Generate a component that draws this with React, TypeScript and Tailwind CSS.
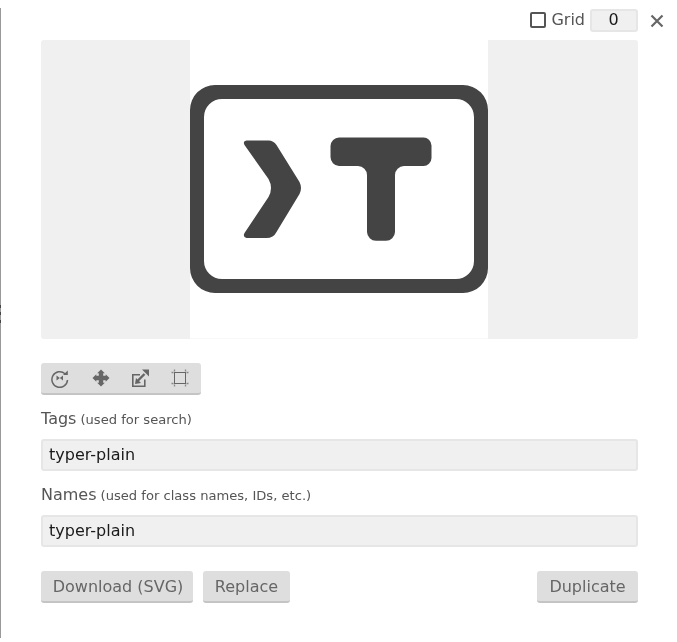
import React from 'react';

const font = { fontFamily: '"DejaVu Sans", sans-serif' };

const RotateIcon = () => (
  <svg width="20" height="20" viewBox="0 0 20 20" fill="none" stroke="#666" strokeWidth="1.500" className="-translate-x-px">
    <path d="M15 5.800A7.800 7.800 0 1 0 17.500 12" />
    <path d="M13 7h4.800V2.500z" fill="#666" stroke="none" />
    <path d="M6.500 7.500l3.300 2.500-3.300 2.500zM13 7.500L9.800 10l3.200 2.500z" fill="#666" stroke="none" />
  </svg>
);

const MoveIcon = () => (
  <svg width="20" height="20" viewBox="0 0 20 20" fill="#666">
    <path d="M10 1.500l3.800 3.800h-1.600v2.500h2.500V6.200L18.500 10l-3.800 3.800v-1.600h-2.500v2.500h1.600L10 18.500l-3.800-3.800h1.600v-2.500H5.300v1.600L1.500 10l3.800-3.800v1.600h2.500V5.300H6.200z" />
  </svg>
);

const ScaleIcon = () => (
  <svg width="20" height="20" viewBox="0 0 20 20" fill="none" stroke="#666" className="-translate-x-px">
    <path d="M10 6.800H2.800v11.400h12V11.500" strokeWidth="1.600" />
    <path d="M5 16l1-6 5 5z" fill="#666" stroke="none" />
    <path d="M7.500 13l7-7" strokeWidth="2.400" />
    <path d="M12 1.500h7v7z" fill="#666" stroke="none" />
  </svg>
);

const CropIcon = () => (
  <svg width="20" height="20" viewBox="0 0 20 20" fill="none" stroke="#666" className="-translate-x-px">
    <rect x="4.500" y="4.500" width="11" height="11" strokeWidth="1" />
    <path d="M4.500 1.500v2M15.500 1.500v2M4.500 16.500v2M15.500 16.500v2M1.500 4.500h2M1.500 15.500h2M16.500 4.500h2M16.500 15.500h2" stroke="#888" strokeWidth="1.300" />
  </svg>
);

const Logo = () => (
  <svg width="298" height="298" viewBox="0 0 298 298" className="block">
    <path
      fillRule="evenodd"
      fill="#444444"
      d="M25 45H273A25 25 0 0 1 298 70V228A25 25 0 0 1 273 253H25A25 25 0 0 1 0 228V70A25 25 0 0 1 25 45ZM32 59A18 18 0 0 0 14 77V221A18 18 0 0 0 32 239H266A18 18 0 0 0 284 221V77A18 18 0 0 0 266 59Z"
    />
    <path
      fill="#444444"
      transform="translate(0.5 0)"
      d="M56 100.500H78Q83 100.500 86 105L109 142Q112 148 109 154L86 192Q83 198 76 198H56Q52 197 54 193L78 157Q83 148 78 139L54 105Q52 101 56 100.500Z"
    />
    <path
      fill="#444444"
      d="M149 97.500H233A8 8 0 0 1 241.500 105.500V118A8 8 0 0 1 233 126H214A9 9 0 0 0 205 135V192A9 9 0 0 1 196 200.700H186A9 9 0 0 1 177 192V135A9 9 0 0 0 168 126H149A9 9 0 0 1 140.500 117V106A9 9 0 0 1 149 97.500Z"
    />
  </svg>
);

const Field = ({ label, hint, value }: { label: string; hint: string; value: string }) => (
  <div className="flex flex-col">
    <div className="h-[20px] flex items-baseline gap-[4px] text-[#555]">
      <span className="text-[16px] leading-[20px]">{label}</span>
      <span className="text-[13.100px] leading-[20px]">{hint}</span>
    </div>
    <div className="mt-[10px] h-[32px] rounded-[3px] bg-[#f0f0f0] border-2 border-[#e6e6e6] px-[6px] flex items-center text-[16px] text-[#1a1a1a]">
      {value}
    </div>
  </div>
);

const Btn = ({ width, children }: { width: string; children: React.ReactNode }) => (
  <button className={`${width} h-[32px] pt-[1px] rounded-[3px] bg-[#dedede] border-b-2 border-[#c4c4c4] text-[16px] text-[#666]`}>
    {children}
  </button>
);

export default function App() {
  return (
    <div className="relative w-[677px] h-[642px] bg-white overflow-hidden [will-change:transform]" style={font}>
      <div className="absolute left-0 top-[8px] bottom-[4px] w-px bg-[#999]" />
      <div className="absolute left-0 top-[305px] w-px h-[3px] bg-[#444]" />
      <div className="absolute left-0 top-[312px] w-px h-[3px] bg-[#444]" />
      <div className="absolute left-0 top-[320px] w-px h-[3px] bg-[#444]" />
      <div className="pl-[41px] pr-[39px]">
        <div className="h-[40px] flex items-center justify-end relative">
          <div className="flex items-center">
            <span className="w-[16px] h-[16px] rounded-[2px] border-2 border-[#555]" />
            <span className="ml-[5px] text-[16px] text-[#555]">Grid</span>
            <span className="ml-[5px] w-[48px] h-[23px] pr-[1px] rounded-[3px] bg-[#f0f0f0] border-2 border-[#e6e6e6] flex items-center justify-center text-[16px] text-[#1a1a1a]">0</span>
          </div>
          <svg className="absolute right-[-26px] top-[14px]" width="14" height="14" viewBox="0 0 14 14" stroke="#666" strokeWidth="2.200">
            <path d="M1.500 1.500L12.500 12.500M12.500 1.500L1.500 12.500" />
          </svg>
        </div>
        <div className="h-[299px] rounded-[3px] bg-[#f0f0f0] pl-[149px]">
          <div className="w-[298px] h-[299px] bg-white border-b border-[#f8f8f8]">
            <Logo />
          </div>
        </div>
        <div className="mt-[24px] w-[160px] h-[32px] rounded-[3px] bg-[#dedede] border-b-2 border-[#c4c4c4] grid grid-cols-4 place-items-center">
          <RotateIcon />
          <MoveIcon />
          <ScaleIcon />
          <CropIcon />
        </div>
        <div className="mt-[14px]">
          <Field label="Tags" hint="(used for search)" value="typer-plain" />
        </div>
        <div className="mt-[14px]">
          <Field label="Names" hint="(used for class names, IDs, etc.)" value="typer-plain" />
        </div>
        <div className="mt-[24px] flex gap-[10px]">
          <Btn width="w-[152px] pl-[2px]">Download (SVG)</Btn>
          <Btn width="w-[87px]">Replace</Btn>
          <div className="ml-auto">
            <Btn width="w-[101px]">Duplicate</Btn>
          </div>
        </div>
      </div>
    </div>
  );
}
